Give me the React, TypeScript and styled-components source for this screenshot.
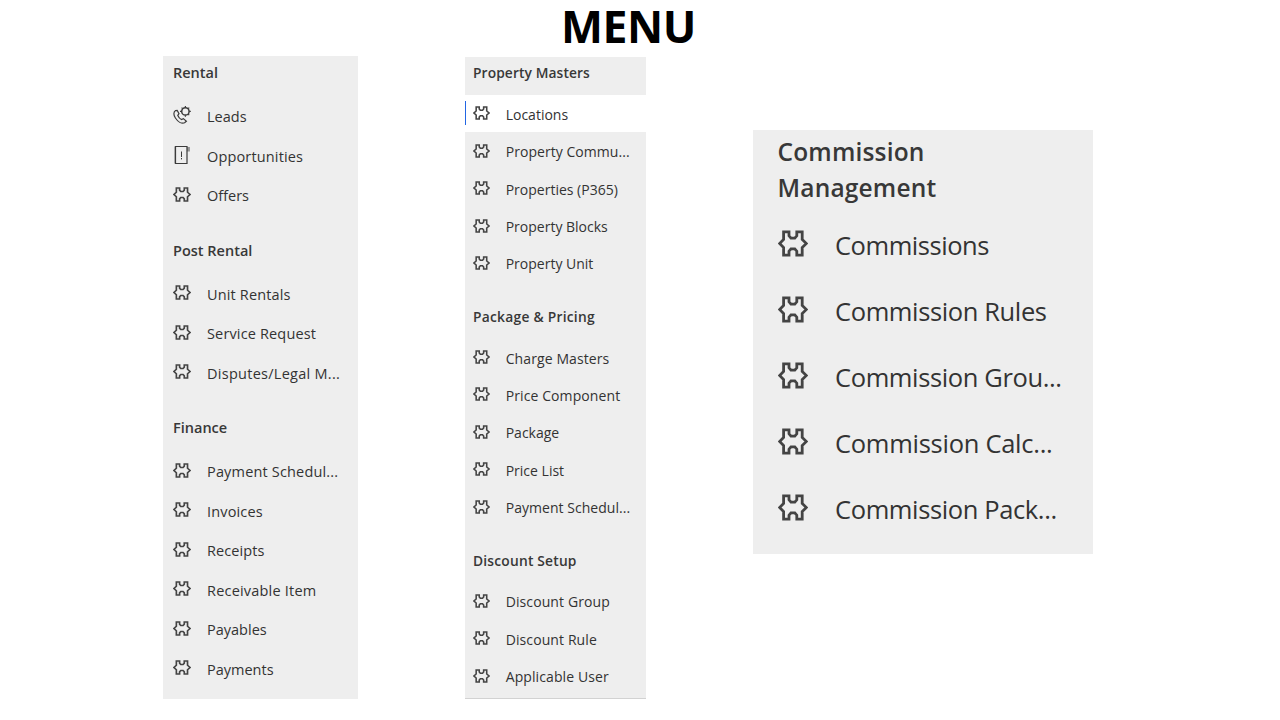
import styled, { createGlobalStyle } from "styled-components";

type IconName = "puzzle" | "lead" | "opportunity";

interface MenuItem {
  label: string;
  icon?: IconName;
  active?: boolean;
  tracking?: number;
}

interface MenuGroup {
  title: string;
  tracking?: number;
  items: MenuItem[];
}

const rentalMenu: MenuGroup[] = [
  {
    title: "Rental",
    items: [
      { label: "Leads", icon: "lead" },
      { label: "Opportunities", icon: "opportunity", tracking: 0.15 },
      { label: "Offers" },
    ],
  },
  {
    title: "Post Rental",
    items: [
      { label: "Unit Rentals", tracking: 0.15 },
      { label: "Service Request", tracking: 0.15 },
      { label: "Disputes/Legal M...", tracking: 0.27 },
    ],
  },
  {
    title: "Finance",
    items: [
      { label: "Payment Schedul...", tracking: 0.17 },
      { label: "Invoices", tracking: 0.15 },
      { label: "Receipts", tracking: 0.1 },
      { label: "Receivable Item", tracking: 0.2 },
      { label: "Payables" },
      { label: "Payments" },
    ],
  },
];

const propertyMenu: MenuGroup[] = [
  {
    title: "Property Masters",
    tracking: 0.1,
    items: [
      { label: "Locations", active: true },
      { label: "Property Commu...", tracking: 0.05 },
      { label: "Properties (P365)" },
      { label: "Property Blocks" },
      { label: "Property Unit" },
    ],
  },
  {
    title: "Package & Pricing",
    tracking: 0.25,
    items: [
      { label: "Charge Masters", tracking: 0.1 },
      { label: "Price Component", tracking: 0.1 },
      { label: "Package" },
      { label: "Price List" },
      { label: "Payment Schedul...", tracking: 0.04 },
    ],
  },
  {
    title: "Discount Setup",
    tracking: 0.2,
    items: [
      { label: "Discount Group", tracking: 0.1 },
      { label: "Discount Rule", tracking: 0.1 },
      { label: "Applicable User", tracking: 0.1 },
    ],
  },
];

const commissionMenu: MenuGroup[] = [
  {
    title: "Commission Management",
    tracking: 0.18,
    items: [
      { label: "Commissions", tracking: -0.45 },
      { label: "Commission Rules", tracking: -0.38 },
      { label: "Commission Grou...", tracking: -0.38 },
      { label: "Commission Calc...", tracking: -0.27 },
      { label: "Commission Pack...", tracking: -0.38 },
    ],
  },
];

const MenuIcon = ({ name = "puzzle" }: { name?: IconName }) => {
  if (name === "lead") {
    return (
      <Icon viewBox="0 0 18 18">
        <path d="M2.6 4.6C0.4 6 0.3 9 2.4 12C4.8 15.6 8.6 18 11.6 16.8L13.4 15.2L10.4 12.6L8.4 13.6C7 12.8 5.6 11.2 4.8 9.4L6 7.6L4.2 4.4Z" />
        <circle cx="12.4" cy="5.4" r="3.7" strokeWidth="1.5" />
        <path d="M12.4 0v1.6M12.4 9.2v1.6M7 5.4h1.6M16.2 5.4h1.6M8.6 1.6l1 1M16.2 1.6l-1 1M16.2 9.2l-1-1" />
      </Icon>
    );
  }
  if (name === "opportunity") {
    return (
      <Icon viewBox="0 0 18 18">
        <path d="M1.6 0.5V17.5" opacity="0.3" strokeWidth="1.2" />
        <path d="M2.5 0.5V17.5H14V0.5Z" />
        <path d="M15.4 1V5.5" opacity="0.5" strokeWidth="3" />
        <path d="M8.5 5.5V11M8.5 12V13.4" strokeWidth="1" />
      </Icon>
    );
  }
  return (
    <PuzzleIcon viewBox="0 0 30 28" preserveAspectRatio="none">
      <path d="M5.6 2H11V6L13 8.4H16.8L18.8 6V2H24.2V9.8L28.4 14L24.2 18.2V26H18.8V22L16.8 19.6H13L11 22V26H5.6V18.2L1.6 14L5.6 9.8Z" />
    </PuzzleIcon>
  );
};

const Menu = ({ groups }: { groups: MenuGroup[] }) => (
  <>
    {groups.map((group) => (
      <Group key={group.title}>
        <GroupTitle $tracking={group.tracking}>{group.title}</GroupTitle>
        {group.items.map((item) => (
          <Row key={item.label} $active={item.active}>
            <IconBox>
              <MenuIcon name={item.icon} />
            </IconBox>
            <Label $tracking={item.tracking}>{item.label}</Label>
          </Row>
        ))}
      </Group>
    ))}
  </>
);

const App = () => {
  return (
    <Page>
      <GlobalStyle />
      <Title>MENU</Title>
      <Columns>
        <RentalPanel>
          <Menu groups={rentalMenu} />
        </RentalPanel>
        <PropertyPanel>
          <Menu groups={propertyMenu} />
        </PropertyPanel>
        <CommissionPanel>
          <Menu groups={commissionMenu} />
        </CommissionPanel>
      </Columns>
    </Page>
  );
};

export default App;

const GlobalStyle = createGlobalStyle`
  * {
    box-sizing: border-box;
  }

  body {
    margin: 0;
    background: #ffffff;
    font-family: "Open Sans", "Noto Sans", sans-serif;
  }
`;

const Page = styled.main`
  width: 1280px;
  height: 720px;
`;

const Title = styled.h1`
  margin: 0;
  padding-right: 23px;
  height: 56px;
  line-height: 52px;
  font-family: "Noto Sans", sans-serif;
  font-size: 44.5px;
  font-weight: 700;
  letter-spacing: -0.4px;
  text-align: center;
  color: #000000;
`;

const Columns = styled.div`
  display: flex;
  align-items: flex-start;
  padding-left: 163px;
`;

const Group = styled.section``;

const GroupTitle = styled.h2<{ $tracking?: number }>`
  margin: 0;
  font-weight: 600;
  letter-spacing: ${({ $tracking = 0 }) => $tracking}px;
  color: #383838;
`;

const Row = styled.div<{ $active?: boolean }>`
  position: relative;
  display: flex;
  align-items: center;
  background: ${({ $active }) => ($active ? "#ffffff" : "transparent")};

  &::before {
    content: "";
    display: ${({ $active }) => ($active ? "block" : "none")};
    position: absolute;
    left: 0;
    top: 6px;
    width: 1px;
    height: 24px;
    background: #2266e3;
  }
`;

const IconBox = styled.span`
  display: flex;
  flex: none;
  align-items: center;
  justify-content: center;
`;

const Icon = styled.svg`
  flex: none;
  fill: none;
  stroke: #3b3b3b;
  stroke-width: 1.2;
`;

const PuzzleIcon = styled(Icon)`
  stroke: #444444;
  stroke-width: 2.8;
`;

const Label = styled.span<{ $tracking?: number }>`
  white-space: nowrap;
  letter-spacing: ${({ $tracking = 0 }) => $tracking}px;
  color: #333333;
`;

const Panel = styled.nav`
  flex: none;
  background: #eeeeee;
`;

const RentalPanel = styled(Panel)`
  width: 195px;
  height: 643px;
  padding-top: 5px;

  ${Group} {
    margin-bottom: 23px;
  }

  ${GroupTitle} {
    padding-left: 10px;
    margin-bottom: 12px;
    font-size: 14.5px;
    line-height: 24px;
  }

  ${Row} {
    height: 39.5px;
    padding-left: 10px;
    gap: 16px;
  }

  ${IconBox} {
    width: 18px;
    margin-top: -3px;
  }

  ${Icon} {
    width: 18px;
    height: 18px;
  }

  ${PuzzleIcon} {
    height: 15px;
  }

  ${Label} {
    font-size: 14.5px;
  }
`;

const PropertyPanel = styled(Panel)`
  width: 181px;
  height: 642px;
  margin: 1px 0 0 107px;
  padding-top: 4px;
  border-bottom: 1px solid #d2d2d2;

  ${Group} {
    margin-bottom: 22.6px;
  }

  ${GroupTitle} {
    padding-left: 8px;
    margin-bottom: 10px;
    font-size: 13.8px;
    line-height: 24px;
  }

  ${Row} {
    height: 37.45px;
    padding-left: 8px;
    gap: 15.7px;
  }

  ${IconBox} {
    width: 17px;
    margin-top: -1px;
  }

  ${Icon} {
    width: 17px;
    height: 14px;
  }

  ${Label} {
    padding-top: 1px;
    font-size: 14px;
  }
`;

const CommissionPanel = styled(Panel)`
  width: 340px;
  height: 424px;
  margin: 74px 0 0 107px;
  padding-top: 4px;

  ${GroupTitle} {
    width: 240px;
    padding-left: 24.5px;
    margin-bottom: 5px;
    font-size: 24.5px;
    line-height: 36px;
  }

  ${Row} {
    height: 65.9px;
    padding-left: 25px;
    gap: 27px;
  }

  ${IconBox} {
    width: 30px;
    margin-top: -1px;
  }

  ${Icon} {
    width: 30px;
    height: 27px;
  }

  ${Label} {
    padding-top: 3px;
    font-size: 25.5px;
  }
`;
